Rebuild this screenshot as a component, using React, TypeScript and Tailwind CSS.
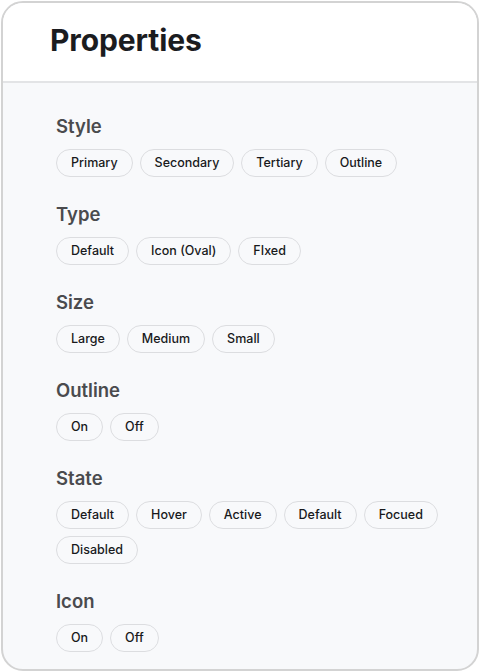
import React from "react";

const sections: { title: string; items: string[] }[] = [
  { title: "Style", items: ["Primary", "Secondary", "Tertiary", "Outline"] },
  { title: "Type", items: ["Default", "Icon (Oval)", "FIxed"] },
  { title: "Size", items: ["Large", "Medium", "Small"] },
  { title: "Outline", items: ["On", "Off"] },
  { title: "State", items: ["Default", "Hover", "Active", "Default", "Focued", "Disabled"] },
  { title: "Icon", items: ["On", "Off"] },
];

export default function App() {
  return (
    <div className="w-[480px] h-[672px] bg-white p-px" style={{ fontFamily: "Inter, 'Noto Sans', sans-serif" }}>
      <div className="h-[670px] w-[478px] rounded-[22px] border-2 border-[#d3d3d3] overflow-hidden flex flex-col bg-[#f8f9fb]">
        <div className="h-[80px] shrink-0 bg-white border-b-2 border-[#e3e4e6] flex items-center pl-[47px] pb-[4px]">
          <h1 className="text-[30px] font-bold text-[#1b1c1f] tracking-[-0.1px]">Properties</h1>
        </div>
        <div className="flex flex-col gap-[25px] pl-[53px] pt-[31px]">
          {sections.map((s) => (
            <div key={s.title} className="flex flex-col gap-[11px]">
              <div className="text-[18.5px] leading-[24px] font-semibold text-[#4a4b4e]">{s.title}</div>
              <div className="flex flex-wrap gap-x-[7px] gap-y-[7px] w-[400px]">
                {s.items.map((it, i) => (
                  <div
                    key={i}
                    className="h-[28px] px-[14px] rounded-full border border-[#dcdde0] bg-[#f8f9fb] flex items-center text-[12.5px] font-medium text-[#18191c]"
                  >
                    {it}
                  </div>
                ))}
              </div>
            </div>
          ))}
        </div>
      </div>
    </div>
  );
}
